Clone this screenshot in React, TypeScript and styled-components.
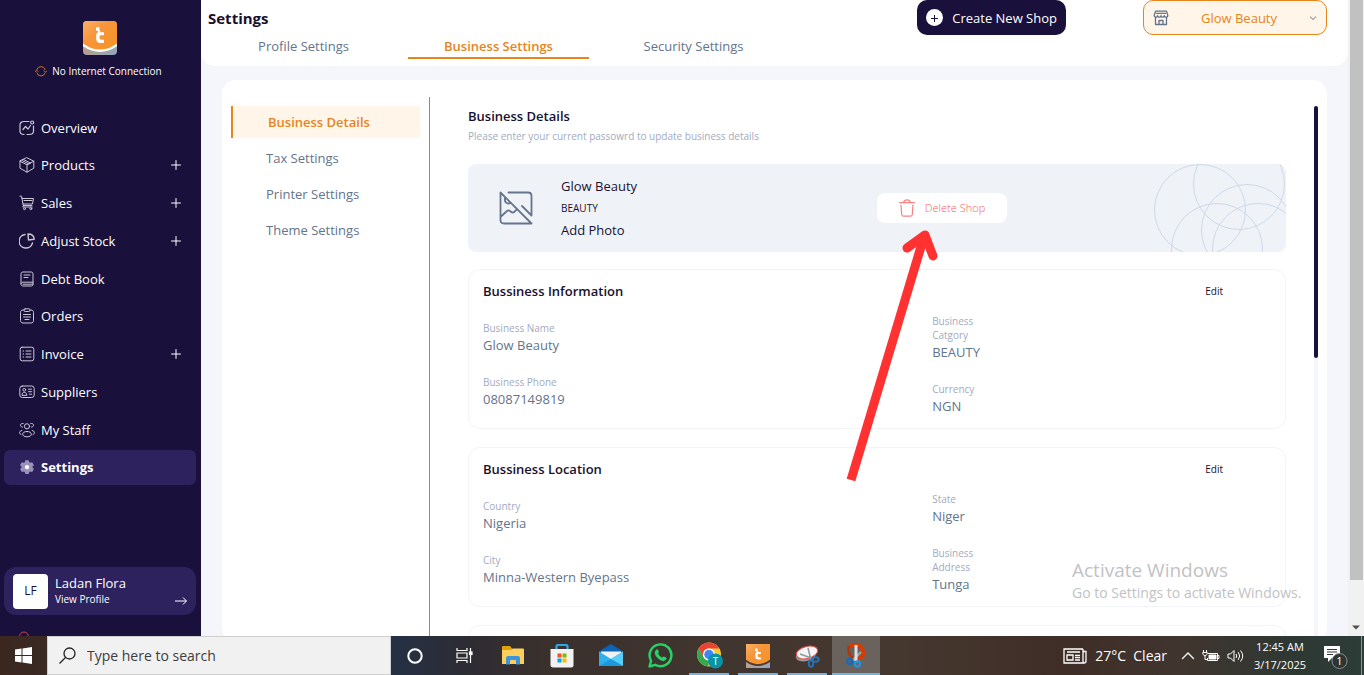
import React from "react";
import styled, { createGlobalStyle, css } from "styled-components";

const c = {
  navy: "#19103b",
  violet: "#2e225e",
  orange: "#e5851c",
  cream: "#fff5e9",
  page: "#f4f6fb",
  slate: "#64748b",
  mist: "#a2abc0",
  ink: "#17112f",
  line: "#f3f4fa",
};

const GlobalStyle = createGlobalStyle`
  *, *::before, *::after { box-sizing: border-box; }
  body { margin: 0; font-family: "Open Sans", "Noto Sans", sans-serif; font-size: 13px; line-height: 20px; color: ${c.ink}; }
  h1, h2, h3, p, dl, dd, ul { margin: 0; padding: 0; }
  button, select, input { font: inherit; color: inherit; border: 0; background: none; padding: 0; margin: 0; }
  a { color: inherit; text-decoration: none; }
  svg { display: block; flex: none; }
`;

const Screen = styled.div`
  display: flex;
  flex-direction: column;
  height: 100vh;
  overflow: hidden;
`;
const Workspace = styled.div`
  position: relative;
  display: flex;
  flex: 1;
  min-height: 0;
  overflow: hidden;
  background: ${c.page};
`;

/* Sidebar */
const Sidebar = styled.aside`
  flex: none;
  width: 201px;
  padding: 21px 4px 0;
  background: ${c.navy};
  color: #fff;
  overflow: hidden;
`;
const LogoLink = styled.a`
  display: flex;
  justify-content: center;
  padding-right: 2px;
`;
const Status = styled.p`
  display: flex;
  align-items: center;
  justify-content: center;
  gap: 5px;
  margin-top: 6px;
  padding-right: 4px;
  font-size: 10px;
  line-height: 20px;
`;
const Nav = styled.nav`
  display: flex;
  flex-direction: column;
  justify-content: space-between;
  height: 375px;
  margin: 29px 1px 0 0;
`;
const NavItem = styled.a<{ $active?: boolean }>`
  display: flex;
  align-items: center;
  gap: 6px;
  height: 35px;
  padding: 0 15px;
  border-radius: 6px;
  font-weight: 500;
  ${(p) => p.$active && css`background: ${c.violet}; font-weight: 700;`}
`;
const NavIcon = styled.span`
  color: #cbc8d6;
`;
const NavLabel = styled.span`
  flex: 1;
`;
const Profile = styled.a`
  display: flex;
  align-items: center;
  gap: 7px;
  height: 48px;
  margin: 82px 1px 0 0;
  padding: 0 9px;
  border-radius: 12px;
  background: ${c.violet};
`;
const Avatar = styled.span`
  display: grid;
  place-items: center;
  width: 35px;
  height: 35px;
  border-radius: 4px;
  background: #fff;
  color: ${c.navy};
  font-size: 12px;
`;
const ProfileText = styled.span`
  display: flex;
  flex: 1;
  flex-direction: column;
  line-height: 16px;
`;
const Small = styled.span`
  font-size: 10px;
`;
const ProfileArrow = styled.span`
  align-self: flex-end;
  padding-bottom: 10px;
`;
const Logout = styled.a`
  display: block;
  margin-top: 16px;
  padding-left: 14px;
  color: #d8414f;
`;

/* Header */
const Main = styled.main`
  display: flex;
  flex: 1;
  flex-direction: column;
  min-width: 0;
`;
const Header = styled.header`
  display: flex;
  align-items: flex-start;
  height: 66px;
  padding: 0 21px 0 7px;
  border-radius: 0 0 14px 14px;
  background: #fff;
`;
const HeaderLeft = styled.div`
  flex: 1;
  padding-top: 8px;
`;
const PageTitle = styled.h1`
  font-size: 15px;
  line-height: 20px;
  font-weight: 700;
`;
const Tabs = styled.nav`
  display: flex;
  gap: 14px;
  margin: 6px 0 0 5px;
`;
const Tab = styled.a<{ $active?: boolean }>`
  width: 181px;
  height: 25px;
  line-height: 24px;
  text-align: center;
  color: ${c.slate};
  ${(p) => p.$active && css`color: ${c.orange}; font-weight: 600; border-bottom: 2px solid ${c.orange};`}
`;
const CreateButton = styled.button`
  display: flex;
  align-items: center;
  gap: 9px;
  height: 35px;
  margin-right: 77px;
  padding: 0 9px;
  border-radius: 10px;
  background: ${c.navy};
  color: #fff;
  font-weight: 500;
`;
const ShopPicker = styled.label`
  display: flex;
  align-items: center;
  width: 184px;
  height: 35px;
  padding: 0 9px 0 9px;
  border: 1px solid ${c.orange};
  border-radius: 10px;
  background: ${c.cream};
  color: ${c.slate};
`;
const ShopSelect = styled.select`
  flex: 1;
  min-width: 0;
  appearance: none;
  outline: none;
  color: ${c.orange};
  text-align: center;
  text-align-last: center;
`;

/* Settings panel */
const Panel = styled.section`
  display: flex;
  flex: 1;
  min-height: 0;
  margin: 14px 21px -6px;
  padding: 0 9px;
  border-radius: 14px;
  background: #fff;
`;
const SubNav = styled.nav`
  display: flex;
  flex: none;
  flex-direction: column;
  gap: 4px;
  width: 199px;
  margin-top: 17px;
  padding: 9px 9px 0 0;
  border-right: 1px solid #8b8b8b;
`;
const SubLink = styled.a<{ $active?: boolean }>`
  height: 32px;
  padding-left: 35px;
  line-height: 32px;
  color: ${c.slate};
  ${(p) => p.$active && css`border-left: 2px solid ${c.orange}; background: ${c.cream}; color: ${c.orange}; font-weight: 600;`}
`;
const Details = styled.div`
  flex: 1;
  min-width: 0;
  padding: 26px 28px 0 38px;
  overflow: hidden;
`;
const Heading = styled.h2`
  font-size: 13px;
  line-height: 20px;
  font-weight: 600;
`;
const Hint = styled.p`
  margin-bottom: 18px;
  font-size: 10px;
  line-height: 20px;
  color: ${c.mist};
`;
const Banner = styled.div`
  display: grid;
  grid-template-columns: 1fr 1fr;
  height: 88px;
  margin-bottom: 17px;
  border-radius: 8px;
  overflow: hidden;
  background: #eff3f8;
`;
const BannerHalf = styled.div`
  display: flex;
  align-items: center;
  justify-content: space-between;
`;
const ShopSummary = styled.div`
  display: flex;
  align-items: center;
  gap: 28px;
  padding-left: 31px;
`;
const ShopLines = styled.div`
  display: flex;
  flex-direction: column;
  align-items: flex-start;
  gap: 2px;
`;
const DeleteButton = styled.button`
  display: flex;
  align-items: center;
  justify-content: center;
  gap: 10px;
  width: 130px;
  height: 30px;
  border-radius: 8px;
  background: #fff;
  color: #f75e5e;
  font-size: 11px;
  font-weight: 300;
`;
const Card = styled.section`
  height: 160px;
  margin-bottom: 18px;
  padding: 11px 14px;
  border: 1px solid ${c.line};
  border-radius: 12px;
`;
const CardHead = styled.div`
  display: flex;
  align-items: center;
  justify-content: space-between;
  margin-bottom: 13px;
  padding-right: 48px;
`;
const EditButton = styled.button`
  font-size: 10px;
  line-height: 16px;
`;
const CardBody = styled.div`
  display: grid;
  grid-template-columns: 57fr 43fr;
  align-items: center;
`;
const Fields = styled.dl<{ $narrow?: boolean }>`
  display: flex;
  flex-direction: column;
  gap: 20px;
  dt { max-width: ${(p) => (p.$narrow ? "60px" : "none")}; }
`;
const Term = styled.dt`
  font-size: 10px;
  line-height: 14px;
  color: ${c.mist};
`;
const Value = styled.dd`
  line-height: 20px;
  color: ${c.slate};
`;
const InnerScroll = styled.div`
  flex: none;
  width: 4px;
  margin-top: 26px;
  border-radius: 2px;
  background: ${c.page};
`;
const InnerThumb = styled.div`
  height: 252px;
  border-radius: 2px;
  background: ${c.navy};
`;
const PageScroll = styled.div`
  display: flex;
  flex: none;
  flex-direction: column;
  align-items: center;
  justify-content: space-between;
  width: 16px;
  padding-bottom: 6px;
  background: #f1f1f1;
`;
const PageThumb = styled.div`
  width: 13px;
  height: 92%;
  background: #c1c1c1;
`;

/* Overlays */
const Pointer = styled.svg`
  position: absolute;
  left: 840px;
  top: 224px;
  pointer-events: none;
`;
const Watermark = styled.div`
  position: absolute;
  right: 56px;
  bottom: 33px;
  width: 236px;
  color: #c2c2c4;
  font-size: 14px;
  line-height: 20px;
`;
const WatermarkTitle = styled.p`
  font-size: 19px;
  line-height: 26px;
`;

/* Taskbar */
const Taskbar = styled.footer`
  display: flex;
  flex: none;
  height: 39px;
  color: #fff;
  background: linear-gradient(90deg, #3b2720 0, #33302f 15%, #253044 29%, #2c2c34 34%, #3a302c 40%, #40352f 52%, #45382f 66%, #3f2d27 78%, #40352f 87%, #2e3833 95%, #2d3c38 100%);
`;
const StartButton = styled.button`
  display: grid;
  place-items: center;
  width: 47px;
`;
const SearchBox = styled.label`
  display: flex;
  align-items: center;
  gap: 11px;
  width: 344px;
  padding-left: 11px;
  border: 1px solid #cfcfcf;
  background: #f1f1f1;
  color: #2f2f2f;
`;
const SearchInput = styled.input`
  flex: 1;
  min-width: 0;
  outline: none;
  font-size: 14px;
  &::placeholder { color: #3d3d3d; opacity: 1; }
`;
const Apps = styled.div`
  display: flex;
  flex: 1;
  gap: 1px;
`;
const AppButton = styled.button<{ $state?: "open" | "active" }>`
  display: flex;
  flex-direction: column;
  align-items: center;
  justify-content: center;
  position: relative;
  width: 48px;
  background: ${(p) => (p.$state === "active" ? "#6a625d" : "none")};
  &::after {
    content: "";
    display: ${(p) => (p.$state ? "block" : "none")};
    position: absolute;
    bottom: 0;
    width: ${(p) => (p.$state === "active" ? "48px" : "40px")};
    height: 2px;
    background: #6fb4e6;
  }
`;
const Tray = styled.div`
  display: flex;
  align-items: center;
  padding-right: 2px;
`;
const Weather = styled.button`
  display: flex;
  align-items: center;
  gap: 8px;
  margin-right: 14px;
  font-size: 14px;
  white-space: pre;
`;
const TrayIcons = styled.div`
  display: flex;
  align-items: center;
  gap: 7px;
  margin-right: 8px;
`;
const TrayButton = styled.button`
  display: grid;
  place-items: center;
`;
const Clock = styled.time`
  width: 56px;
  margin-right: 16px;
  font-size: 11px;
  line-height: 18px;
  text-align: center;
  white-space: nowrap;
`;
const Edge = styled.span`
  width: 1px;
  height: 39px;
  margin-left: 13px;
  background: #8b9390;
`;

const Line = ({ size = 16, box = 16, w = 1, children }: { size?: number; box?: number; w?: number; children: React.ReactNode }) => (
  <svg width={size} height={size} viewBox={`0 0 ${box} ${box}`} fill="none" stroke="currentColor" strokeWidth={w} strokeLinecap="round" strokeLinejoin="round" aria-hidden="true">
    {children}
  </svg>
);

const navIcons: Record<string, React.ReactNode> = {
  Overview: (
    <Line w={1.2}><path d="M10 1.500H5C2.500 1.500 1 3 1 5v6c0 2 1.500 3.500 4 3.500M8 14.500h2.500c2.500 0 4-1.500 4-3.500V6" /><path d="M4 9.500l2.500-3 2.500 2.500 2.500-3.500" /><circle cx="13.200" cy="2.500" r="1.500" /></Line>
  ),
  Products: (
    <Line><path d="M8 .8l6.800 3.400v7L8 15.200 1 11.200v-7zM1 4.200l7 3.600 6.800-3.600M8 7.800v7.400M4.500 2.500l7 3.600M3 3.500l7 3.500" /></Line>
  ),
  Sales: (
    <Line><path d="M1 1.200h1.500l1.800 9.300h8.500M3 3.500h11.500l-1 5.500H4M5 5.500h8" /><path d="M4.500 10.500l-.8 1.500h9.500" /><circle cx="5.500" cy="13.700" r="1" /><circle cx="11.800" cy="13.700" r="1" /></Line>
  ),
  "Adjust Stock": (
    <Line w={1.4}><path d="M6 1.500A6.800 6.800 0 1 0 13.500 10M9 1c3.500 0 6 2 6.200 5.200L9.500 7z" /></Line>
  ),
  "Debt Book": (
    <Line><path d="M2 12.500V3c0-1.300.8-2 2-2h8c1.300 0 2 .7 2 2v10.500c0 .8-.6 1.500-1.500 1.500H4c-1.200 0-2-1-2-2s.8-1.800 2-1.800h10M4 13.200h10M5 4h6M5 6.500h4" /></Line>
  ),
  Orders: (
    <Line><path d="M5 2H4C2.200 2 1.500 3 1.500 4.500v8C1.500 14 2.500 15 4 15h8c1.500 0 2.500-1 2.500-2.500v-8C14.500 3 13.500 2 12 2h-1" /><rect x="5" y=".8" width="6" height="2.700" rx="1.200" /><path d="M4.500 6.500h7M4.500 9h7M6 11.500h4" /></Line>
  ),
  Invoice: (
    <Line><rect x="1.200" y="1.200" width="13.600" height="13.600" rx="2" /><path d="M7 5h5M7 8h5M7 11h5M4 5h.6M4 8h.6M4 11h.6" /></Line>
  ),
  Suppliers: (
    <Line><rect x=".8" y="2" width="14.400" height="11.500" rx="2.500" /><circle cx="5.300" cy="5.800" r="1.400" /><path d="M3 11c0-2 1-2.600 2.300-2.600S7.800 9 7.800 11zM9.500 5.200h3M9.500 7.700h3M10.500 10.200h2" /></Line>
  ),
  "My Staff": (
    <Line><circle cx="8" cy="4.300" r="2.600" /><path d="M8 9.500c-3 0-4.300 1.300-4.300 2.700S5 14.800 8 14.800s4.300-1.100 4.300-2.600S11 9.500 8 9.500zM4.200 1.500C2.500 1.100 1.200 2.200 1.500 3.500c.2.900.9 1.500 1.900 1.600M11.800 1.500c1.700-.4 3 .7 2.700 2-.2.900-.9 1.500-1.900 1.600M2.800 8.500C1.500 8.800.6 9.500.6 10.700c0 .8.500 1.500 1.400 1.800M13.200 8.500c1.300.3 2.200 1 2.200 2.200 0 .8-.5 1.500-1.400 1.800" /></Line>
  ),
  Settings: (
    <svg width="16" height="16" viewBox="0 0 16 16" aria-hidden="true"><path fill="#9a92bd" d="M6.300 1.200h3.400l.5 2 1 .6 2-.6 1.700 3-1.400 1.400v1l1.400 1.400-1.700 3-2-.6-1 .6-.5 2H6.300l-.5-2-1-.6-2 .6-1.700-3 1.400-1.400v-1L1.100 6.200l1.700-3 2 .6 1-.6z" /><circle cx="8" cy="8.100" r="2.200" fill="#fff" /></svg>
  ),
};

const navItems = [
  { label: "Overview" },
  { label: "Products", more: true },
  { label: "Sales", more: true },
  { label: "Adjust Stock", more: true },
  { label: "Debt Book" },
  { label: "Orders" },
  { label: "Invoice", more: true },
  { label: "Suppliers" },
  { label: "My Staff" },
  { label: "Settings", active: true },
];

const Logo = ({ size, square }: { size: number; square?: boolean }) => (
  <svg width={size} height={size} viewBox="0 0 34 34" role="img" aria-label="Logo">
    <defs>
      <linearGradient id={`sun${size}`} x1="0" y1="0" x2="1" y2="1"><stop offset="0" stopColor="#fbb169" /><stop offset=".4" stopColor="#f7953a" /><stop offset="1" stopColor="#f69322" /></linearGradient>
      <linearGradient id={`dusk${size}`}><stop offset="0" stopColor="#b5a08f" /><stop offset="1" stopColor="#93a5bd" /></linearGradient>
      <clipPath id={`clip${size}`}><rect width="34" height="34" rx={square ? 0 : 4} /></clipPath>
    </defs>
    <g clipPath={`url(#clip${size})`}>
      <rect width="34" height="34" fill={`url(#dusk${size})`} />
      <path d="M0 0h34v23.500Q17 37 0 23.500z" fill={`url(#sun${size})`} />
      <path d="M-1 23.200Q17 36.500 35 23.200" fill="none" stroke={square ? "#4a3b33" : "#fff"} strokeWidth="2.400" />
      <path d="M13 6.300h3.500v3.500H13zM15 9.800h2.200v1.400H21v3h-3.500q-1 0-1 1.500v1q0 2 2.200 2H21v3.200h-3.500q-4.300 0-4.300-4.500v-4q0-1.500 1.800-2.200z" fill="#fff" />
    </g>
  </svg>
);

const WindowsIcon = () => (
  <svg width="17" height="17" viewBox="0 0 17 17" fill="#fff" aria-hidden="true"><path d="M0 2.500L6.500 1.600V8H0zM7.500 1.400L17 0v8H7.500zM0 9h6.500v6.400L0 14.500zM7.500 9H17v8l-9.500-1.400z" /></svg>
);
const TaskViewIcon = () => (
  <svg width="17" height="17" viewBox="0 0 17 17" fill="none" stroke="#fff" strokeWidth="1.200" aria-hidden="true"><path d="M1 1v2.500h10V1M1 16v-2.500h10V16M1 6h10v5H1zM14.500 1v15" /><rect x="13.500" y="5" width="2.500" height="2.500" fill="#fff" /></svg>
);
const FolderIcon = () => (
  <svg width="22" height="19" viewBox="0 0 22 19" aria-hidden="true"><path d="M0 1q0-1 1-1h7l2 2.500V18H0z" fill="#e0a10c" /><path d="M0 4h9l1.500-1.500H21q1 0 1 1V18H0z" fill="#fccf5a" /><path d="M4 18.500V12q0-2 2-2h10q2 0 2 2v6.500h-4V15q0-1-1-1H9q-1 0-1 1v3.500z" fill="#3e94dc" /></svg>
);
const StoreIcon = () => (
  <svg width="24" height="24" viewBox="0 0 24 24" aria-hidden="true"><path d="M6.500 6V2.500Q6.500 1 8 1h8q1.500 0 1.500 1.500V6" fill="none" stroke="#2ba8e8" strokeWidth="2.200" /><path d="M.5 5h23v16q0 2.500-2.500 2.500H3Q.5 23.500.5 21z" fill="#f2f2f2" /><path d="M7.500 9.500h4v4h-4z" fill="#f25022" /><path d="M12.500 9.500h4v4h-4z" fill="#7fba00" /><path d="M7.500 14.500h4v4h-4z" fill="#00a4ef" /><path d="M12.500 14.500h4v4h-4z" fill="#ffb900" /></svg>
);
const MailIcon = () => (
  <svg width="24" height="23" viewBox="0 0 24 23" aria-hidden="true"><path d="M0 7.500L12 0l12 7.500V12H0z" fill="#0c64b8" /><path d="M2 7.500h20v6l-10 5-10-5z" fill="#f1f1f1" /><path d="M0 7.500L12 15l12-7.500V22H0z" fill="#2cb1ee" /><path d="M24 7.500L12 15l12 7z" fill="#58cdf8" /><path d="M0 22l12-7 12 7z" fill="#1c98e0" /></svg>
);
const WhatsAppIcon = () => (
  <svg width="25" height="25" viewBox="0 0 25 25" aria-hidden="true"><path d="M1.500 23.500l1.600-5.700a10.900 10.900 0 1 1 4.100 4z" fill="none" stroke="#25d366" strokeWidth="2.400" strokeLinejoin="round" /><path d="M8.500 6.500c.6-.4 1.300-.3 1.600.4l.8 1.900c.2.500-.7 1.500-.9 1.800 1 2 2.300 3.200 4.400 4.100.5-.5 1-1.500 1.600-1.300l2.100 1c.8.400.4 2-.4 2.700-1 .9-2.500 1.100-4.500.3-3-1.200-5.200-3.600-6.200-6.200-.6-1.900.1-3.700 1.500-4.700z" fill="#25d366" /></svg>
);
const ChromeIcon = () => (
  <svg width="27" height="27" viewBox="0 0 27 27" aria-hidden="true"><circle cx="13" cy="12.500" r="12" fill="#fcc934" /><path d="M2.600 6.500A12 12 0 0 1 23.400 6.500H13A6 6 0 0 0 7.800 15.500z" fill="#ea4335" /><path d="M2.600 6.500L7.800 15.500A6 6 0 0 0 13 18.500l-1 6A12 12 0 0 1 2.600 6.500z" fill="#34a853" /><circle cx="13" cy="12.500" r="6" fill="#fff" /><circle cx="13" cy="12.500" r="4.700" fill="#4285f4" /><circle cx="19.500" cy="19" r="7.500" fill="#0795a6" /><text x="19.500" y="22.500" fontSize="10" textAnchor="middle" fill="#fff">T</text></svg>
);
const SnipIcon = () => (
  <svg width="25" height="24" viewBox="0 0 25 24" fill="none" aria-hidden="true"><ellipse cx="11" cy="11" rx="10.500" ry="6" transform="rotate(-15 11 11)" fill="#999" /><ellipse cx="12" cy="8.500" rx="11" ry="6" transform="rotate(-15 12 8.500)" fill="#f5f5f5" stroke="#dc4b4b" /><path d="M5 10l14 5M13 4l3 12" stroke="#8e979e" strokeWidth="1.500" /><ellipse cx="20.500" cy="15.500" rx="3.200" ry="2.200" stroke="#2472b5" strokeWidth="2" /><ellipse cx="16" cy="19.500" rx="2.200" ry="3.200" stroke="#2472b5" strokeWidth="2" /></svg>
);
const SketchIcon = () => (
  <svg width="20" height="25" viewBox="0 0 20 25" fill="none" aria-hidden="true"><path d="M4 3q10-4 13 5 2 6-6 8" stroke="#d83b01" strokeWidth="4" /><path d="M3 3q-2 8 4 12" stroke="#b83204" strokeWidth="2.500" /><path d="M15 9l-9 9" stroke="#9fa5aa" strokeWidth="2.400" /><path d="M10 2v16" stroke="#dfe2e5" strokeWidth="3" /><circle cx="3.800" cy="18.500" r="2.600" stroke="#0f6cbd" strokeWidth="2.200" /><circle cx="11.500" cy="21" r="2.600" stroke="#2494e0" strokeWidth="2.200" /></svg>
);

const apps: { name: string; icon: React.ReactNode; state?: "open" | "active" }[] = [
  { name: "Cortana", icon: <svg width="16" height="16" viewBox="0 0 16 16" aria-hidden="true"><circle cx="8" cy="8" r="6.700" fill="none" stroke="#fff" strokeWidth="2" /></svg> },
  { name: "Task view", icon: <TaskViewIcon /> },
  { name: "Files", icon: <FolderIcon /> },
  { name: "Store", icon: <StoreIcon /> },
  { name: "Mail", icon: <MailIcon /> },
  { name: "WhatsApp", icon: <WhatsAppIcon /> },
  { name: "Chrome", icon: <ChromeIcon />, state: "open" },
  { name: "Shop", icon: <Logo size={24} square />, state: "open" },
  { name: "Snipping", icon: <SnipIcon />, state: "open" },
  { name: "Sketch", icon: <SketchIcon />, state: "active" },
];

type Field = [string, string];
const InfoCard = ({ title, left, right }: { title: string; left: Field[]; right: Field[] }) => (
  <Card>
    <CardHead>
      <Heading as="h3">{title}</Heading>
      <EditButton>Edit</EditButton>
    </CardHead>
    <CardBody>
      {[left, right].map((fields, i) => (
        <Fields key={i} $narrow={i === 1}>
          {fields.map(([term, value]) => (
            <div key={term}>
              <Term>{term}</Term>
              <Value>{value}</Value>
            </div>
          ))}
        </Fields>
      ))}
    </CardBody>
  </Card>
);

export default function App() {
  return (
    <Screen>
      <GlobalStyle />
      <Workspace>
        <Sidebar>
          <LogoLink href="#"><Logo size={34} /></LogoLink>
          <Status>
            <svg width="12" height="12" viewBox="0 0 12 12" fill="none" stroke="#c8700f" aria-hidden="true"><path d="M1.800 5A4.300 4.300 0 0 1 10.200 5M10.200 7.500A4.300 4.300 0 0 1 1.800 7.500M0 7l1.500-2L3.200 6.800M8.800 5.500L10.500 7.300 12 5.500" /></svg>
            No Internet Connection
          </Status>
          <Nav>
            {navItems.map((n) => (
              <NavItem key={n.label} href="#" $active={n.active}>
                <NavIcon>{navIcons[n.label]}</NavIcon>
                <NavLabel>{n.label}</NavLabel>
                {n.more && <Line size={10} box={10}><path d="M5 .5v9M.5 5h9" /></Line>}
              </NavItem>
            ))}
          </Nav>
          <Profile href="#">
            <Avatar>LF</Avatar>
            <ProfileText>
              Ladan Flora
              <Small>View Profile</Small>
            </ProfileText>
            <ProfileArrow><svg width="12" height="8" viewBox="0 0 12 8" fill="none" stroke="#fff" aria-hidden="true"><path d="M0 4h11.300M8 .5L11.500 4 8 7.500" /></svg></ProfileArrow>
          </Profile>
          <Logout href="#" aria-label="Log out"><Line size={12} box={12}><circle cx="6" cy="5.500" r="4.500" /></Line></Logout>
        </Sidebar>

        <Main>
          <Header>
            <HeaderLeft>
              <PageTitle>Settings</PageTitle>
              <Tabs>
                <Tab href="#">Profile Settings</Tab>
                <Tab href="#" $active>Business Settings</Tab>
                <Tab href="#">Security Settings</Tab>
              </Tabs>
            </HeaderLeft>
            <CreateButton>
              <svg width="17" height="17" viewBox="0 0 17 17" aria-hidden="true"><circle cx="8.500" cy="8.500" r="8.500" fill="#fff" /><path d="M8.500 6v7M5 9.500h7" stroke={c.navy} /></svg>
              Create New Shop
            </CreateButton>
            <ShopPicker>
              <Line w={1.3}><path d="M2.500 7.500v7h11v-7M2.500 1.200h11l1.300 4c0 1.300-.9 2-1.800 2-1 0-1.700-.6-1.700-1.600 0 1-.7 1.600-1.700 1.600S8 6.600 8 5.600c0 1-.7 1.600-1.700 1.600s-1.700-.6-1.700-1.600c0 1-.7 1.600-1.700 1.600-1 0-1.700-.7-1.700-2zM6 14.500v-4h4v4M3.500 3.300h9" /></Line>
              <ShopSelect aria-label="Shop" defaultValue="Glow Beauty"><option>Glow Beauty</option></ShopSelect>
              <Line size={8} box={8}><path d="M1.200 2.800L4 5.500l2.800-2.700" /></Line>
            </ShopPicker>
          </Header>

          <Panel>
            <SubNav>
              <SubLink href="#" $active>Business Details</SubLink>
              <SubLink href="#">Tax Settings</SubLink>
              <SubLink href="#">Printer Settings</SubLink>
              <SubLink href="#">Theme Settings</SubLink>
            </SubNav>
            <Details>
              <Heading>Business Details</Heading>
              <Hint>Please enter your current passowrd to update business details</Hint>
              <Banner>
                <BannerHalf>
                  <ShopSummary>
                    <svg width="34" height="34" viewBox="0 0 34 34" fill="none" stroke={c.slate} strokeWidth="1.800" strokeLinecap="round" strokeLinejoin="round" aria-hidden="true"><path d="M1.500 1.500l31 31H5q-3.500 0-3.500-3.500zM9.500 1.500H29q3.500 0 3.500 3.500v19.500L23 15M6 7c-1 4 2 6.500 5.500 5M2 25.500l6-5.500q1.500-1.200 3 0l1.500 1.200q1.500.8 3-.5l2.500-2.500" /></svg>
                    <ShopLines>
                      <span>Glow Beauty</span>
                      <Small>BEAUTY</Small>
                      <button>Add Photo</button>
                    </ShopLines>
                  </ShopSummary>
                </BannerHalf>
                <BannerHalf>
                  <DeleteButton>
                    <svg width="16" height="18" viewBox="0 0 16 18" fill="none" stroke="#f98080" strokeWidth="1.200" strokeLinecap="round" aria-hidden="true"><path d="M.6 3.700h14.800M4.500 3.500Q5.500.8 8 .8t3.500 2.700M2 6l.7 9.500q.2 1.700 2 1.700h6.600q1.800 0 2-1.700L14 6" /></svg>
                    Delete Shop
                  </DeleteButton>
                  <svg width="132" height="88" viewBox="0 0 132 88" fill="none" stroke="#cdd8e8" aria-hidden="true"><circle cx="46" cy="46" r="45.500" /><circle cx="85" cy="20" r="45.500" /><circle cx="93" cy="66" r="45.500" /><circle cx="63" cy="85" r="45.500" /><circle cx="104" cy="85" r="45.500" /></svg>
                </BannerHalf>
              </Banner>
              <InfoCard
                title="Bussiness Information"
                left={[["Business Name", "Glow Beauty"], ["Business Phone", "08087149819"]]}
                right={[["Business Catgory", "BEAUTY"], ["Currency", "NGN"]]}
              />
              <InfoCard
                title="Bussiness Location"
                left={[["Country", "Nigeria"], ["City", "Minna-Western Byepass"]]}
                right={[["State", "Niger"], ["Business Address", "Tunga"]]}
              />
              <Card />
            </Details>
            <InnerScroll><InnerThumb /></InnerScroll>
          </Panel>
        </Main>
        <PageScroll>
          <PageThumb />
          <svg width="8" height="5" viewBox="0 0 8 5" aria-hidden="true"><path d="M0 .5h8L4 4.500z" fill="#505050" /></svg>
        </PageScroll>

        <Pointer width="104" height="264" viewBox="0 0 104 264" fill="none" stroke="#ff3131" strokeWidth="9" aria-hidden="true">
          <path d="M11 256L84.500 11" />
          <path d="M67 24l18-13 8 21" strokeLinecap="round" strokeLinejoin="round" />
        </Pointer>
        <Watermark>
          <WatermarkTitle>Activate Windows</WatermarkTitle>
          <p>Go to Settings to activate Windows.</p>
        </Watermark>
      </Workspace>

      <Taskbar>
        <StartButton aria-label="Start"><WindowsIcon /></StartButton>
        <SearchBox>
          <svg width="17" height="17" viewBox="0 0 17 17" fill="none" stroke="#222" strokeWidth="1.300" aria-hidden="true"><circle cx="10.500" cy="6.500" r="5.500" /><path d="M6.500 10.500L.5 16.500" /></svg>
          <SearchInput type="text" aria-label="Search" placeholder="Type here to search" />
        </SearchBox>
        <Apps>
          {apps.map((a) => (
            <AppButton key={a.name} aria-label={a.name} $state={a.state}>{a.icon}</AppButton>
          ))}
        </Apps>
        <Tray>
          <Weather>
            <svg width="24" height="16" viewBox="0 0 24 16" fill="none" stroke="#fff" strokeWidth="1.300" aria-hidden="true"><path d="M20 1H1v14h20q2 0 2-2V3.500h-3V13M20 1v12q0 2 1 2M4 4h13M4 7h6v5H4zM12 7.500h5M12 9.700h5M12 12h5" /></svg>
            27°C  Clear
          </Weather>
          <TrayIcons>
            <TrayButton aria-label="Hidden icons"><Line size={14} box={14} w={1.3}><path d="M1.500 9.500L7 4l5.500 5.500" /></Line></TrayButton>
            <TrayButton aria-label="Battery"><svg width="18" height="14" viewBox="0 0 18 14" fill="none" stroke="#fff" aria-hidden="true"><path d="M6 4.500h9.500v7h-10V9M15.500 6.500h1.500v3h-1.500M1.500 1v2.500M4.500 1v2.500M.8 3.500h4.400v1.700L3 7 .8 5.200zM3 7v3.500h2" /><path d="M7 6h7v4H7z" fill="#fff" /></svg></TrayButton>
            <TrayButton aria-label="Volume"><svg width="17" height="14" viewBox="0 0 17 14" fill="none" stroke="#fff" aria-hidden="true"><path d="M1 5h2.500L7 1.500v11L3.500 9H1zM9 5q1.500 2 0 4M11.200 3.200q3 3.800 0 7.600M13.500 1.500q4.500 5.500 0 11" /></svg></TrayButton>
          </TrayIcons>
          <Clock>12:45 AM<br />3/17/2025</Clock>
          <TrayButton aria-label="Notifications">
            <svg width="24" height="26" viewBox="0 0 24 26" aria-hidden="true"><path d="M0 3h16v12H8l-4 4v-4H0z" fill="#fff" /><path d="M3 6.500h10M3 9h10M3 11.500h6" stroke="#343a36" /><circle cx="15.500" cy="18" r="7.500" fill="#2d3532" stroke="#8a908d" /><text x="15.500" y="22" fontSize="11" textAnchor="middle" fill="#fff">1</text></svg>
          </TrayButton>
          <Edge />
        </Tray>
      </Taskbar>
    </Screen>
  );
}
